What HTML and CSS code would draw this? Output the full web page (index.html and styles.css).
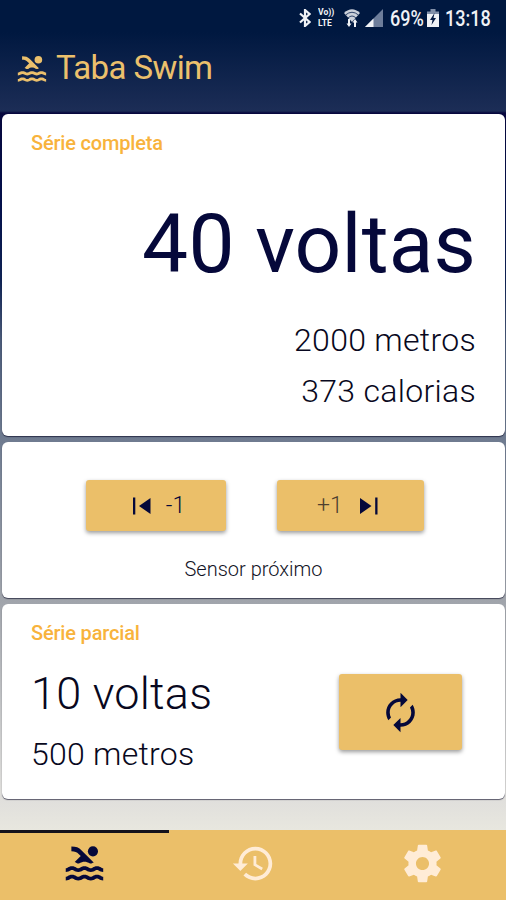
FILE: index.html
```html
<!DOCTYPE html>
<html lang="pt-BR">
<head>
<meta charset="utf-8">
<title>Taba Swim</title>
<link rel="stylesheet" href="styles.css">
</head>
<body>
<svg class="defs" width="0" height="0">
  <symbol id="pool" viewBox="0 0 24 24">
    <path id="wave" d="M22 21c-1.11 0-1.73-.37-2.18-.64-.37-.22-.6-.36-1.15-.36-.56 0-.78.13-1.15.36-.46.27-1.07.64-2.18.64s-1.73-.37-2.18-.64c-.37-.22-.6-.36-1.15-.36-.56 0-.78.13-1.15.36-.46.27-1.08.64-2.19.64-1.11 0-1.73-.37-2.18-.64-.37-.23-.6-.36-1.15-.36s-.78.13-1.15.36c-.46.27-1.08.64-2.19.64v-2c.56 0 .78-.13 1.15-.36.45-.27 1.07-.64 2.18-.64s1.73.37 2.18.64c.37.23.59.36 1.15.36.56 0 .78-.13 1.15-.36.45-.27 1.07-.64 2.18-.64 1.11 0 1.73.37 2.18.64.37.22.6.36 1.15.36s.78-.13 1.15-.36c.45-.27 1.07-.64 2.18-.64s1.73.37 2.18.64c.37.23.59.36 1.15.36v2z"/>
    <use href="#wave" y="-4.5"/>
    <path d="M8.67 12c.56 0 .78-.13 1.15-.36.46-.27 1.08-.64 2.19-.64 1.11 0 1.73.37 2.18.64.37.22.6.36 1.15.36s.78-.13 1.15-.36c.12-.07.26-.15.41-.23L10.48 5C8.93 3.45 7.5 2.99 5 3v2.500c1.820-.01 2.890.39 4 1.500l1 1-3.250 3.250c.31.12.56.27.77.39.37.23.59.36 1.150.36z"/>
    <circle cx="16.500" cy="5.500" r="2.700"/>
  </symbol>
</svg>
<div class="status">
  <svg class="bt" width="12" height="18" viewBox="0 0 12 18"><path d="M1 4.500 10.500 13 6 17V1l4.500 4L1 13.500" fill="none" stroke="currentColor" stroke-width="2.200"/></svg>
  <div class="volte"><span>Vo))</span><span>LTE</span></div>
  <svg class="wifi" width="16" height="18" viewBox="0 0 16 18"><path d="M0 4Q8-3.500 16 4L8 13z" fill="currentColor" opacity=".85"/><path d="M1.500 6Q8 .500 14.500 6M4 9Q8 5 12 9" fill="none" stroke="#31456a" stroke-width="1"/><path d="M2.500 14.500 5 18l2.500-3.500H6V10H4v4.500zM8.500 13.500 11 10l2.500 3.500H12V18h-2v-4.500z" fill="currentColor"/></svg>
  <svg class="signal" width="18" height="18" viewBox="0 0 18 18"><path d="M0 18 18 0v18z" fill="#6d7d9a"/><path d="M0 18 8.500 9.500V18z" fill="currentColor"/></svg>
  <div class="pct"><span>69%</span></div>
  <svg class="battery" width="12" height="18" viewBox="0 0 12 18"><path d="M3.500 0h5v2.500H12V6H0V2.500h3.500z" fill="#8290a9"/><path d="M0 5h12v13H0z" fill="currentColor"/><path d="M7.500 4 3 11h2.500L4.500 16 9 9H6.500z" fill="#061b43"/></svg>
  <div class="clock"><span>13:18</span></div>
</div>
<header class="appbar">
  <svg width="34" height="34"><use href="#pool"/></svg>
  <h1>Taba Swim</h1>
</header>
<main>
  <section class="card full">
    <h2>Série completa</h2>
    <p class="laps">40 voltas</p>
    <p class="line">2000 metros</p>
    <p class="line cal">373 calorias</p>
  </section>
  <section class="card adjust">
    <div class="buttons">
      <button class="minus"><svg width="18" height="18" viewBox="0 0 18 18"><path d="M0 .5h2.300v17H0zM17.500 1v16L6 9z" fill="currentColor"/></svg><span>-1</span></button>
      <button class="plus"><span>+1</span><svg width="18" height="18" viewBox="0 0 18 18"><path d="M15.200 .5h2.300v17h-2.300zM0 1v16L11.500 9z" fill="currentColor"/></svg></button>
    </div>
    <p class="sensor">Sensor próximo</p>
  </section>
  <section class="card partial">
    <div>
      <h2>Série parcial</h2>
      <p class="plaps">10 voltas</p>
      <p class="pline">500 metros</p>
    </div>
    <button class="reset"><svg width="43" height="43" viewBox="0 0 24 24" fill="currentColor"><path d="M12 6v3l4-4-4-4v3c-4.420 0-8 3.580-8 8 0 1.570.46 3.030 1.240 4.260L6.700 14.800c-.45-.83-.7-1.790-.7-2.800 0-3.310 2.690-6 6-6zm6.760 1.740L17.300 9.200c.44.84.7 1.790.7 2.800 0 3.310-2.690 6-6 6v-3l-4 4 4 4v-3c4.420 0 8-3.580 8-8 0-1.570-.46-3.030-1.240-4.260z"/></svg></button>
  </section>
</main>
<nav class="tabs">
  <div class="tab active"><svg width="45" height="45"><use href="#pool"/></svg></div>
  <div class="tab"><svg width="45" height="45" viewBox="0 0 24 24" fill="currentColor"><path d="M13 3c-4.970 0-9 4.030-9 9H1l3.890 3.890.07.14L9 12H6c0-3.870 3.130-7 7-7s7 3.130 7 7-3.130 7-7 7c-1.930 0-3.680-.79-4.940-2.060l-1.420 1.420C8.270 19.990 10.510 21 13 21c4.970 0 9-4.030 9-9s-4.030-9-9-9zm-1 5v5l4.280 2.540.72-1.210-3.500-2.080V8H12z"/></svg></div>
  <div class="tab"><svg width="45" height="45" viewBox="0 0 24 24" fill="currentColor"><path d="M19.430 12.980c.04-.32.07-.64.07-.98s-.03-.66-.07-.98l2.110-1.650c.19-.15.24-.42.12-.64l-2-3.460c-.12-.22-.39-.3-.61-.22l-2.490 1c-.52-.4-1.080-.73-1.690-.98l-.38-2.650C14.460 2.180 14.250 2 14 2h-4c-.25 0-.46.18-.49.42l-.38 2.650c-.61.25-1.170.59-1.690.98l-2.490-1c-.23-.09-.49 0-.61.22l-2 3.460c-.13.22-.07.49.12.64l2.110 1.650c-.04.32-.07.65-.07.98s.03.66.07.98l-2.110 1.650c-.19.15-.24.42-.12.64l2 3.460c.12.22.39.3.61.22l2.490-1c.52.4 1.080.73 1.690.98l.38 2.650c.03.24.24.42.49.42h4c.25 0 .46-.18.49-.42l.38-2.650c.61-.25 1.170-.59 1.690-.98l2.490 1c.23.09.49 0 .61-.22l2-3.460c.12-.22.07-.49-.12-.64l-2.110-1.650zM12 15.500c-1.930 0-3.500-1.570-3.500-3.500s1.570-3.500 3.500-3.500 3.500 1.570 3.500 3.500-1.570 3.500-3.500 3.500z"/></svg></div>
</nav>
</body>
</html>
```
FILE: styles.css
```css
* { box-sizing: border-box; margin: 0; padding: 0; }
body {
  width: 506px; height: 900px; overflow: hidden;
  display: flex; flex-direction: column;
  font-family: Roboto, "Liberation Sans", sans-serif;
  color: #05083a;
  background: linear-gradient(#001840 0, #001840 32px, #1c2d56 111px, #07083e 113px, #04104c 200px, #0f2355 280px, #4b5b79 340px, #6f7b90 440px, #a0a4ab 600px, #e0dfdc 800px, #e8e7df 830px);
}
h1, h2 { font-weight: 400; }
p, h1, h2 { white-space: nowrap; }
.defs { position: absolute; }
.status { height: 37px; padding: 9px 14px 0 299px; display: flex; color: #f0f2f6; }
.status svg { flex: none; }
.volte { width: 18px; margin-left: 7px; padding-top: 1px; font: 700 9px/11px Roboto, sans-serif; }
.volte span { display: block; height: 9px; transform-origin: 0 0; transform: scaleX(.95); }
.volte span + span { margin-top: 2px; }
.volte { margin-top: -3px; }
.wifi { margin-left: 8px; }
.signal { margin-left: 5px; }
.pct { width: 34px; margin-left: 7px; }
.clock { width: 46px; margin-left: 6px; }
.battery { margin-left: 3px; }
.pct span, .clock span { display: block; width: 60px; font-size: 22px; font-weight: 500; line-height: 18px; transform-origin: 0 0; transform: translateY(1px) scaleX(.82); }
.appbar { height: 76px; padding-left: 15px; display: flex; color: #ebc06c; fill: currentColor; }
.appbar svg { margin-top: 15px; }
.appbar h1 { margin: 11px 0 0 7px; font-size: 33px; line-height: 40px; letter-spacing: -.6px; }
main { display: flex; flex-direction: column; gap: 6px; padding: 1px 1px 0 2px; flex: 1; }
.card { background: #fff; border-radius: 6px; box-shadow: 0 1px 1px rgba(0,0,30,.6); }
.card h2 { color: #f8b33c; font-size: 20px; line-height: 24px; font-weight: 500; letter-spacing: -.18px; }
.full { height: 322px; padding: 17px 29px 0; }
.laps { text-align: right; font-size: 82px; line-height: 96px; margin-top: 41px; letter-spacing: .2px; }
.line { text-align: right; font-weight: 300; font-size: 32px; line-height: 40px; margin-top: 28px; color: #080820; letter-spacing: .3px; }
.cal { margin-top: 11px; }
.adjust { height: 156px; padding-top: 38px; }
.buttons { display: flex; gap: 51px; padding-left: 84px; }
button { border: 0; border-radius: 3px; background: #ebbf69; color: #05083a; font: 300 23px Roboto, sans-serif; display: flex; align-items: center; justify-content: center; box-shadow: 0 2px 4px rgba(0,0,0,.4); }
.minus, .plus { height: 51px; gap: 15px; }
.minus { width: 140px; padding-left: 6px; }
.plus { width: 147px; gap: 17px; padding-right: 6px; }
.plus span { color: #4e402f; }
.sensor { text-align: center; margin-top: 26px; font-weight: 300; font-size: 20px; line-height: 24px; color: #111225; }
.partial { height: 195px; display: flex; justify-content: space-between; padding: 17px 43px 0 29px; }
.plaps { font-weight: 300; font-size: 45px; line-height: 54px; margin-top: 22px; color: #080820; letter-spacing: .25px; }
.pline { font-weight: 300; font-size: 32px; line-height: 40px; margin-top: 13px; color: #080820; letter-spacing: .25px; }
.reset { width: 123px; height: 76px; margin-top: 53px; }
.tabs { height: 70px; background: #ebbf69; display: grid; grid-template-columns: 169px 169px 168px; color: #ffecd6; }
.tab { display: flex; justify-content: center; padding-top: 11px; }
.active { color: #05083a; fill: currentColor; border-top: 3px solid #14121c; padding-top: 8px; }
```
